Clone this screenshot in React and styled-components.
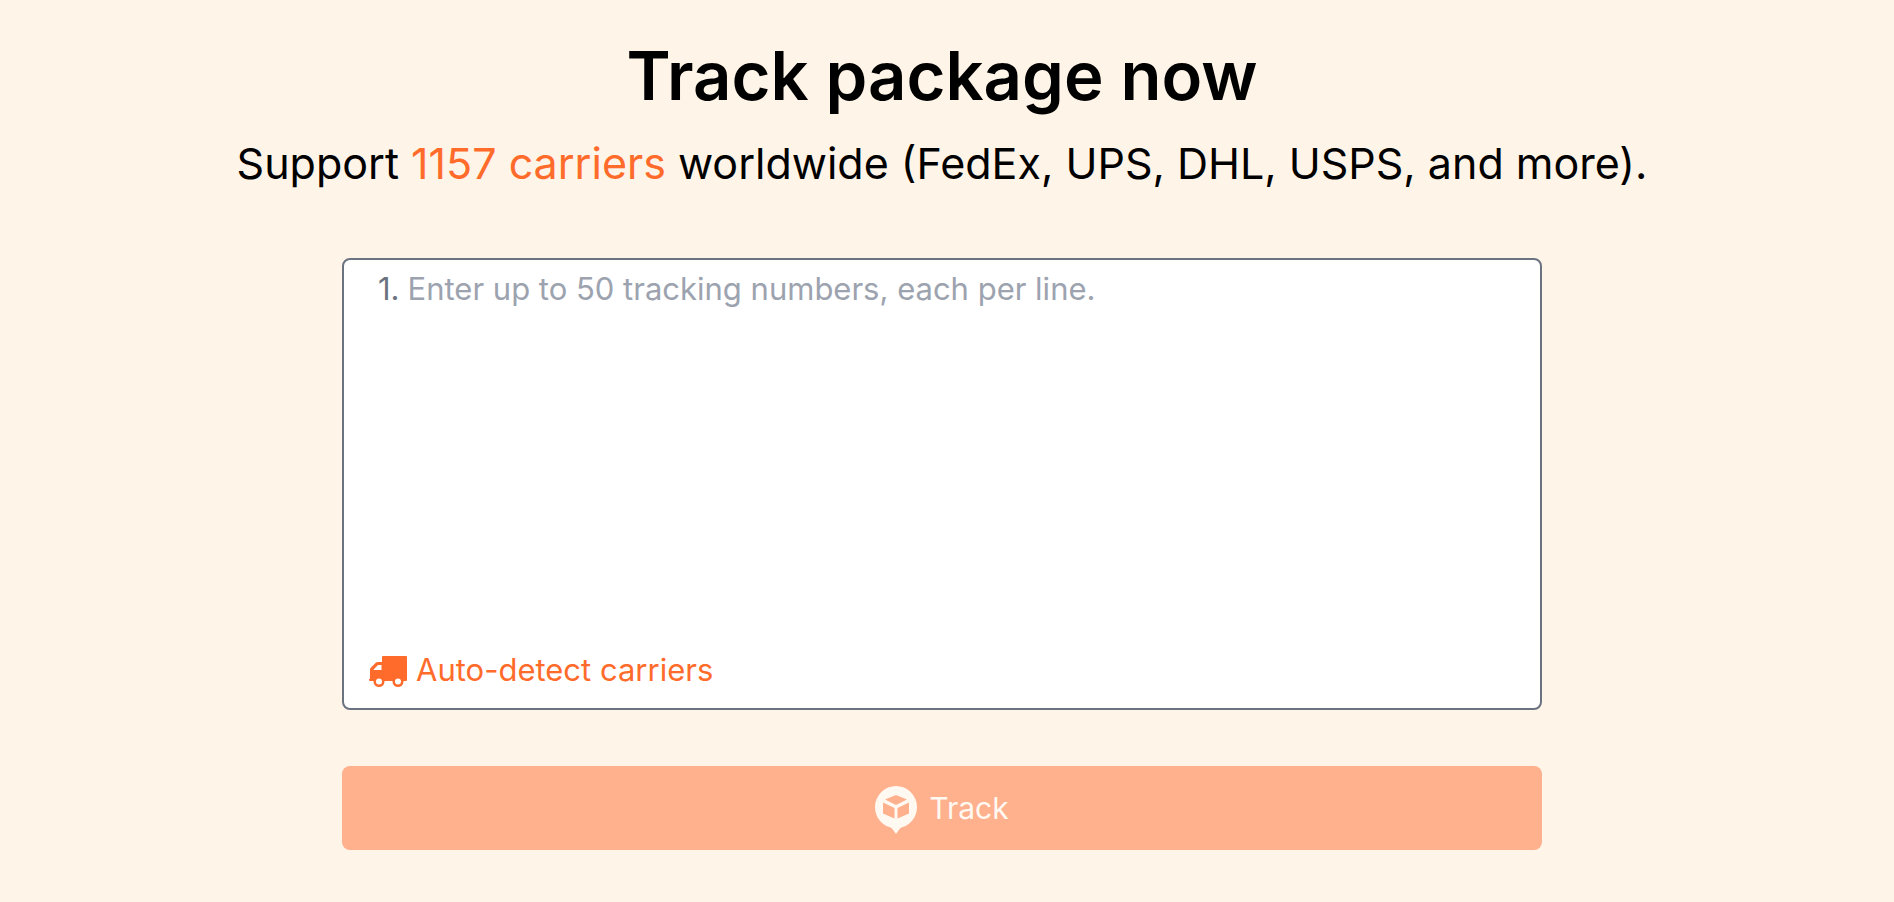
import React, { useState } from 'react';
import styled, { createGlobalStyle } from 'styled-components';

const GlobalStyle = createGlobalStyle`
  * {
    box-sizing: border-box;
  }
  body {
    margin: 0;
    background-color: #fff4e8;
    color: #000;
    font-family: Inter, "Liberation Sans", sans-serif;
  }
`

const Page = styled.main`
  display: flex;
  flex-direction: column;
  align-items: center;
  padding: 40px 10px 52px 0;
`

const Title = styled.h1`
  margin: 0;
  font-size: 67px;
  font-weight: 600;
  line-height: 72px;
  text-align: center;
`

const Subtitle = styled.p`
  margin: 16px 0 0;
  font-size: 43px;
  line-height: 70px;
  text-align: center;
`

const Highlight = styled.span`
  color: #ff6b2b;
`

const Form = styled.form`
  display: flex;
  flex-direction: column;
  gap: 56px;
  width: 100%;
  max-width: 1200px;
  margin-top: 60px;
`

const Field = styled.div`
  display: flex;
  flex-direction: column;
  padding: 8px 24px 14px;
  background-color: #fff;
  border: 2px solid #6b7280;
  border-radius: 8px;
`

const Lines = styled.div`
  display: flex;
  gap: 8px;
  padding-left: 10px;
  font-size: 31px;
  line-height: 42px;
`

const LineNumber = styled.label`
  color: #6b7280;
`

const Numbers = styled.textarea`
  flex: 1;
  min-width: 0;
  height: 378px;
  padding: 0;
  border: 0;
  outline: 0;
  resize: none;
  background: transparent;
  color: #111827;
  font: inherit;
  &::placeholder {
    color: #9ca3af;
    opacity: 1;
  }
`

const CarrierButton = styled.button`
  display: flex;
  align-items: center;
  align-self: flex-start;
  gap: 9px;
  padding: 0;
  border: 0;
  background: none;
  color: #ff6b2b;
  font: inherit;
  font-size: 31px;
  line-height: 48px;
  cursor: pointer;
`

const TrackButton = styled.button`
  display: flex;
  align-items: center;
  justify-content: center;
  gap: 12px;
  padding: 16px;
  border: 0;
  border-radius: 8px;
  background-color: #ffb08d;
  color: #fff9f2;
  font: inherit;
  font-size: 30px;
  line-height: 48px;
`

const TruckIcon = () => (
  <svg width="39" height="33" viewBox="-1 -2 39 33" fill="currentColor" aria-hidden="true">
    <path
      fillRule="evenodd"
      d="M14 0H37Q38 0 38 1V24Q38 25 37 25H1Q0 25 0 24V23H1V13.5Q1 12.5 2 11.5L6.5 7Q7.5 6 9 6H13V1Q13 0 14 0ZM12.5 9H9L4.5 13.5V14H12.5Z"
    />
    <circle cx="10" cy="25.5" r="5.5" />
    <circle cx="29" cy="25.5" r="5.5" />
    <circle cx="10" cy="25.5" r="3" fill="#fff" />
    <circle cx="29" cy="25.5" r="3" fill="#fff" />
  </svg>
)

const ParcelPin = () => (
  <svg width="42" height="52" viewBox="0 -4 42 52" aria-hidden="true">
    <path
      fill="currentColor"
      d="M21 0A21 21 0 0 1 42 21C42 31 35.5 39 27 41.3C24.5 42 23 45.5 21 48C19 45.5 17.5 42 15 41.3C6.5 39 0 31 0 21A21 21 0 0 1 21 0Z"
    />
    <g fill="#ffb08d">
      <path d="M21 9L32 13.5L21 19L10 13.5Z" />
      <path d="M8 16.5L19.5 22V32.5L8 27.5Z" />
      <path d="M34 16.5L22.5 22V32.5L34 27.5Z" />
    </g>
  </svg>
)

const App = () => {
  const [numbers, setNumbers] = useState('')

  return (
    <>
      <GlobalStyle />
      <Page>
        <Title>Track package now</Title>
        <Subtitle>
          Support <Highlight>1157 carriers</Highlight> worldwide (FedEx, UPS, DHL, USPS, and more).
        </Subtitle>
        <Form onSubmit={e => e.preventDefault()}>
          <Field>
            <Lines>
              <LineNumber htmlFor="numbers">1.</LineNumber>
              <Numbers
                id="numbers"
                value={numbers}
                onChange={e => setNumbers(e.target.value)}
                placeholder="Enter up to 50 tracking numbers, each per line."
              />
            </Lines>
            <CarrierButton type="button">
              <TruckIcon />
              Auto-detect carriers
            </CarrierButton>
          </Field>
          <TrackButton type="submit" disabled={!numbers.trim()}>
            <ParcelPin />
            Track
          </TrackButton>
        </Form>
      </Page>
    </>
  )
}

export default App;
